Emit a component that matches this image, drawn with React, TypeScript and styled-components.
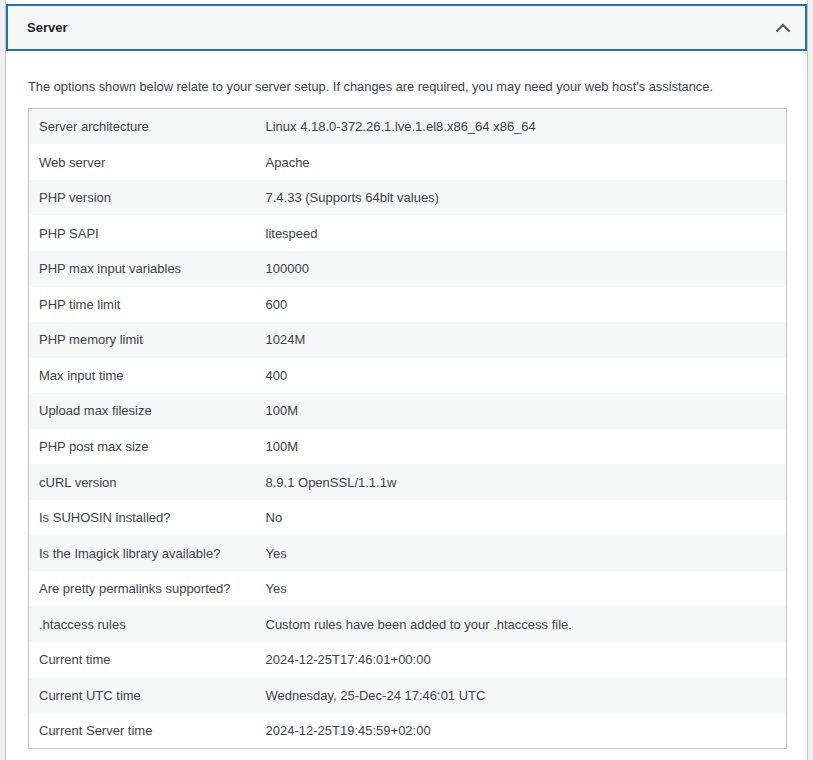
import React from "react";
import styled, { createGlobalStyle } from "styled-components";

const Global = createGlobalStyle`
  html, body { margin: 0; padding: 0; background: #f0f0f1; }
  body { font-family: "Liberation Sans", Arial, sans-serif; color: #3c434a; }
`;

const Page = styled.div`padding: 0 5px 0 5px;`;
const Panel = styled.section`
  background: #fff;
  border: 1px solid #c3c4c7;
  border-top: none;
  padding-top: 4px;
  min-height: 780px;
`;
const Header = styled.button`
  display: flex; align-items: center; justify-content: space-between;
  width: 100%; height: 47px; box-sizing: border-box;
  padding: 0 14px 0 21px;
  background: #f6f7f7; border: none; outline: 2px solid #2271b1; outline-offset: -2px;
  font-family: inherit; font-size: 13px; font-weight: 600; color: #1d2327;
  cursor: pointer;
`;
const Body = styled.div`padding: 26px 20px 0 22px;`;
const Desc = styled.p`margin: 0 0 12px; font-size: 12.85px; line-height: 1.5; color: #3c434a;`;
const Table = styled.table`
  width: 100%; border-collapse: collapse; border: 1px solid #c3c4c7;
  box-shadow: 0 1px 1px rgba(0,0,0,.04); font-size: 13px;
`;
const Row = styled.tr<{ $odd: boolean }>`background: ${p => (p.$odd ? "#f6f7f7" : "#fff")};`;
const Cell = styled.td<{ $w?: string }>`
  height: 35.55px; padding: 0 10px; box-sizing: border-box; color: #3c434a;
  width: ${p => p.$w || "auto"};
`;

const rows: [string, string][] = [
  ["Server architecture", "Linux 4.18.0-372.26.1.lve.1.el8.x86_64 x86_64"],
  ["Web server", "Apache"],
  ["PHP version", "7.4.33 (Supports 64bit values)"],
  ["PHP SAPI", "litespeed"],
  ["PHP max input variables", "100000"],
  ["PHP time limit", "600"],
  ["PHP memory limit", "1024M"],
  ["Max input time", "400"],
  ["Upload max filesize", "100M"],
  ["PHP post max size", "100M"],
  ["cURL version", "8.9.1 OpenSSL/1.1.1w"],
  ["Is SUHOSIN installed?", "No"],
  ["Is the Imagick library available?", "Yes"],
  ["Are pretty permalinks supported?", "Yes"],
  [".htaccess rules", "Custom rules have been added to your .htaccess file."],
  ["Current time", "2024-12-25T17:46:01+00:00"],
  ["Current UTC time", "Wednesday, 25-Dec-24 17:46:01 UTC"],
  ["Current Server time", "2024-12-25T19:45:59+02:00"],
];

export default function App() {
  return (
    <Page>
      <Global />
      <Panel>
        <Header>
          <span>Server</span>
          <svg width="20" height="20" viewBox="0 0 20 20">
            <path d="M3.5 13.5 L10 7 L16.5 13.5" fill="none" stroke="#50575e" strokeWidth="2" />
          </svg>
        </Header>
        <Body>
          <Desc>The options shown below relate to your server setup. If changes are required, you may need your web host's assistance.</Desc>
          <Table>
            <tbody>
              {rows.map(([k, v], i) => (
                <Row key={k} $odd={i % 2 === 0}>
                  <Cell $w="227px">{k}</Cell>
                  <Cell>{v}</Cell>
                </Row>
              ))}
            </tbody>
          </Table>
        </Body>
      </Panel>
    </Page>
  );
}
